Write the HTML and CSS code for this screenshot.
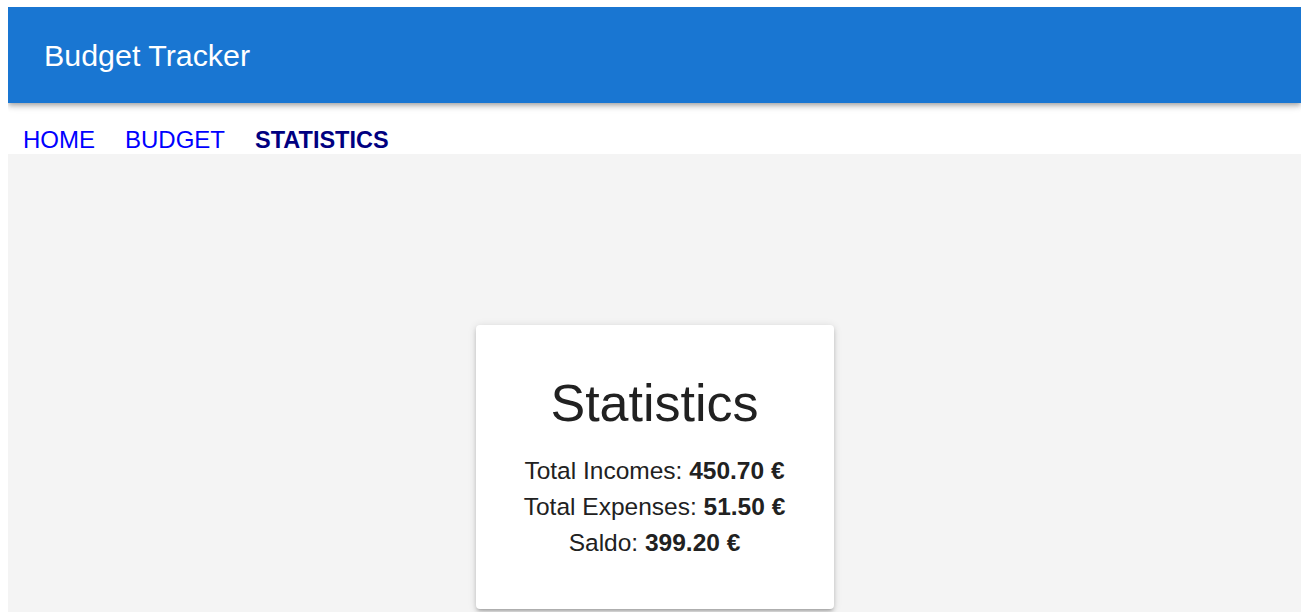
FILE: index.html
```html
<!DOCTYPE html>
<html lang="en">
<head>
<meta charset="utf-8">
<title>Budget Tracker</title>
<link rel="stylesheet" href="styles.css">
</head>
<body>
  <header class="app-bar">
    <h1 class="app-title">Budget Tracker</h1>
  </header>
  <nav class="nav">
    <a class="nav-link" href="#">HOME</a>
    <a class="nav-link" href="#">BUDGET</a>
    <a class="nav-link active" href="#">STATISTICS</a>
  </nav>
  <main class="content">
    <section class="card">
      <h2 class="card-title">Statistics</h2>
      <p class="stat">Total Incomes: <strong>450.70 €</strong></p>
      <p class="stat">Total Expenses: <strong>51.50 €</strong></p>
      <p class="stat">Saldo: <strong>399.20 €</strong></p>
    </section>
  </main>
</body>
</html>
```
FILE: styles.css
```css
html, body {
  height: 100%;
}
body {
  margin: 7px 2px 0 8px;
  font-family: "Liberation Sans", Arial, sans-serif;
  color: #212121;
  background: #ffffff;
  display: flex;
  flex-direction: column;
  overflow: hidden;
}
.app-bar {
  height: 96px;
  flex: none;
  background: #1976d2;
  display: flex;
  align-items: center;
  padding-left: 36px;
  box-shadow: 0 2px 4px -1px rgba(0,0,0,.2), 0 4px 5px 0 rgba(0,0,0,.14), 0 1px 10px 0 rgba(0,0,0,.12);
  position: relative;
  z-index: 1;
}
.app-title {
  margin: 0;
  font-size: 30.4px;
  font-weight: normal;
  color: #ffffff;
  line-height: normal;
}
.nav {
  flex: none;
  display: flex;
  align-items: flex-end;
  padding-top: 23px;
  height: 28px;
}
.nav-link {
  padding: 0 15px;
  font-size: 24px;
  line-height: 28px;
  color: #0000ff;
  text-decoration: none;
}
.nav-link.active {
  color: #000080;
  font-weight: bold;
  font-size: 23.5px;
}
.content {
  flex: 1;
  background: #f4f4f4;
  display: flex;
  justify-content: center;
  align-items: flex-start;
}
.card {
  margin-top: 171px;
  width: 358px;
  box-sizing: border-box;
  padding: 48px 0;
  background: #ffffff;
  border-radius: 4px;
  text-align: center;
  box-shadow: 0 3px 3px -2px rgba(0,0,0,.2), 0 3px 4px 0 rgba(0,0,0,.14), 0 1px 8px 0 rgba(0,0,0,.12);
}
.card-title {
  margin: 0 0 20px;
  font-size: 52px;
  line-height: 60px;
  font-weight: normal;
  color: #212121;
}
.stat {
  margin: 0;
  font-size: 24.5px;
  line-height: 36px;
}
.stat strong {
  font-weight: bold;
}
```
